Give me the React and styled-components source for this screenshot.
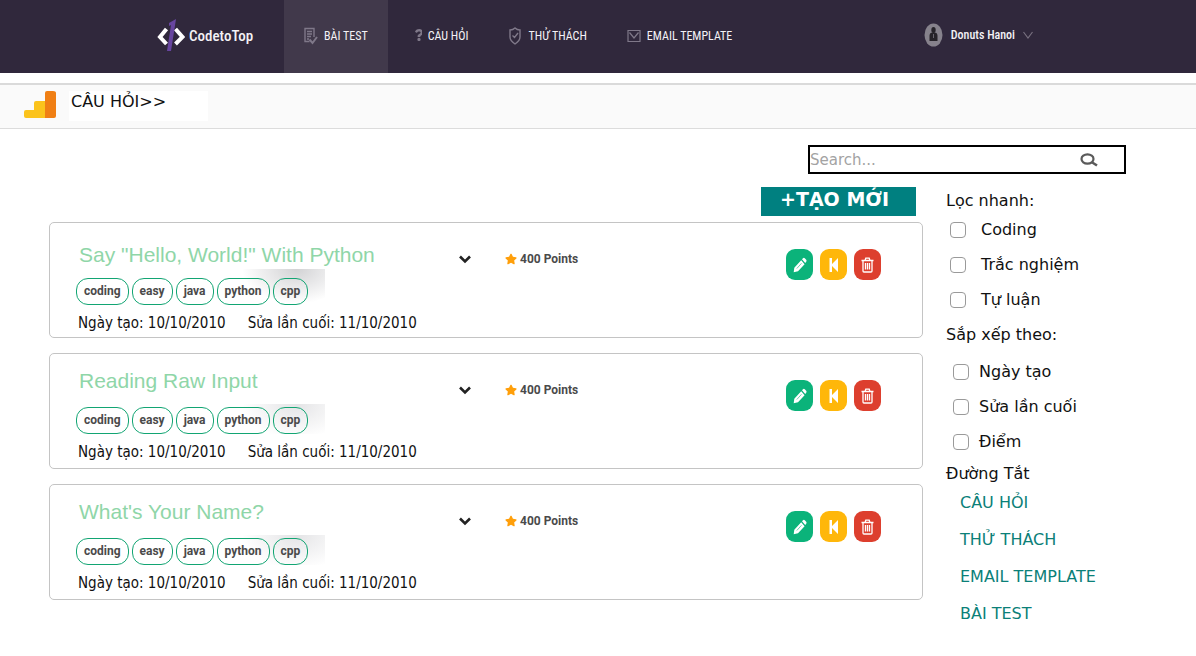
import React from "react";
import styled, { createGlobalStyle } from "styled-components";
import { FaStar, FaQuestion } from "react-icons/fa";

const GlobalStyle = createGlobalStyle`
  *, *::before, *::after { box-sizing: border-box; }
  body {
    margin: 0;
    background: #fff;
    color: #111;
    font-family: "DejaVu Sans", sans-serif;
    font-size: 16px;
  }
  button, input { font: inherit; }
  ul, h1, h2, p { margin: 0; padding: 0; list-style: none; font-weight: 400; font-size: inherit; }
  a { color: inherit; text-decoration: none; }
  svg { display: block; flex: none; }
`;

const Header = styled.header`
  display: flex;
  align-items: stretch;
  height: 73px;
  padding: 0 163px 0 157px;
  background: #30283c;
  color: #f4f2f6;
  font-family: "Roboto Condensed", "Liberation Sans Narrow", Roboto, sans-serif;
  white-space: nowrap;
`;

const Brand = styled.a`
  display: flex;
  align-items: center;
  gap: 4px;
  width: 127px;
  padding-bottom: 2px;
  font-size: 15px;
  font-weight: 500;
`;

const Nav = styled.nav`
  display: flex;
`;

const NavLink = styled.a`
  display: flex;
  align-items: center;
  gap: 6px;
  padding: 0 20px 2px;
  font-size: 12px;
  font-weight: 400;
  background: ${(p) => (p.$active ? "#41394b" : "transparent")};
  svg { color: #7f7889; }
`;

const UserButton = styled.button`
  display: flex;
  align-items: center;
  gap: 8px;
  margin-left: auto;
  padding: 0 0 4px;
  border: 0;
  background: none;
  color: inherit;
  font-family: inherit;
  font-size: 12px;
  font-weight: 500;
`;

const Breadcrumb = styled.div`
  display: flex;
  align-items: flex-start;
  gap: 13px;
  height: 46px;
  margin-top: 10px;
  padding: 6px 24px 0;
  background: #fafafa;
  border-top: 2px solid #dadada;
  border-bottom: 1px solid #dcdcdc;
`;

const Crumb = styled.h1`
  width: 139px;
  height: 30px;
  padding-left: 2px;
  background: #fff;
  line-height: 22px;
`;

const Page = styled.main`
  display: grid;
  grid-template-columns: minmax(0, 1fr) 180px;
  column-gap: 23px;
  padding: 16px 70px 32px 49px;
`;

const Search = styled.form`
  grid-column: 1 / -1;
  justify-self: end;
  display: flex;
  align-items: center;
  width: 318px;
  height: 29px;
  margin-bottom: 13px;
  padding-right: 25px;
  border: 2px solid #000;
`;

const SearchInput = styled.input`
  flex: 1;
  min-width: 0;
  padding: 0;
  border: 0;
  outline: 0;
  background: none;
  font-size: 15px;
  &::placeholder { color: #a3a3a3; opacity: 1; }
`;

const PlainButton = styled.button`
  display: flex;
  align-items: center;
  padding: 0;
  border: 0;
  background: none;
  color: #222;
`;

const Questions = styled.section`
  display: flex;
  flex-direction: column;
`;

const CreateButton = styled.button`
  align-self: flex-end;
  width: 155px;
  height: 29px;
  margin: 0 7px 6px 0;
  padding: 0 8px 5px 0;
  border: 0;
  background: #008080;
  color: #fff;
  font-size: 19px;
  font-weight: 700;
  line-height: 24px;
  white-space: nowrap;
`;

const CardList = styled.ul`
  display: flex;
  flex-direction: column;
  gap: 15px;
`;

const Card = styled.li`
  display: grid;
  grid-template-columns: minmax(0, 382px) 47px minmax(0, 1fr) auto;
  align-items: start;
  min-height: 116px;
  padding: 0 41px 0 26px;
  border: 1px solid #c4c4c4;
  border-radius: 5px;
`;

const Info = styled.div`
  padding-top: ${(p) => (p.$lead ? "20px" : "15px")};
`;

const Title = styled.h2`
  padding-left: 3px;
  color: #8fd6a8;
  font-family: "Liberation Sans", sans-serif;
  font-size: 21px;
  line-height: 24px;
  white-space: nowrap;
`;

const Tags = styled.ul`
  display: flex;
  gap: 3px;
  width: fit-content;
  margin-top: ${(p) => (p.$lead ? "2px" : "11px")};
  padding: ${(p) => (p.$lead ? "9px" : "3px")} 17px 0 0;
  background: radial-gradient(ellipse at 65% 0, ${(p) => (p.$lead ? "#d2d2d4" : "#e4e4e6")}, #fff 72%)
    right top / 82px 34px no-repeat;
`;

const Tag = styled.li`
  height: 27px;
  padding: 0 7px;
  border: 1px solid #12a573;
  border-radius: 12px;
  color: #4a4a4a;
  font-family: Roboto, sans-serif;
  font-size: 12px;
  font-weight: 700;
  line-height: 24px;
`;

const Dates = styled.p`
  display: flex;
  gap: 22px;
  margin-top: 9px;
  padding-left: 2px;
  font-family: "DejaVu Sans Condensed", "DejaVu Sans", sans-serif;
  font-size: 15px;
  line-height: 18px;
  white-space: nowrap;
`;

const Toggle = styled(PlainButton)`
  margin-top: 32px;
`;

const Points = styled.p`
  display: flex;
  align-items: center;
  gap: 3px;
  margin-top: 28px;
  color: #4a4a4a;
  font-family: Roboto, sans-serif;
  font-size: 12px;
  font-weight: 700;
  line-height: 16px;
  svg { color: #ff9f0a; }
`;

const Actions = styled.div`
  display: flex;
  gap: 7px;
  margin-top: 26px;
`;

const ActionButton = styled.button`
  display: flex;
  align-items: center;
  justify-content: center;
  width: 27px;
  height: 31px;
  padding: 0;
  border: 0;
  border-radius: 9px;
  background: ${(p) => p.$color};
  color: #fff;
`;

const Sidebar = styled.aside`
  padding-top: 4px;
`;

const SideTitle = styled.h2`
  line-height: 20px;
  white-space: nowrap;
`;

const Options = styled.ul`
  display: flex;
  flex-direction: column;
  gap: 15px;
  padding: ${(p) => (p.$wide ? "17px 0 12px 7px" : "9px 0 15px 4px")};
`;

const Option = styled.label`
  display: flex;
  align-items: center;
  gap: ${(p) => (p.$wide ? "10px" : "15px")};
  line-height: 20px;
  white-space: nowrap;
`;

const Checkbox = styled.input`
  appearance: none;
  width: 16px;
  height: 16px;
  margin: 0;
  border: 1px solid #9a9a9a;
  border-radius: 4px;
  background: #fff;
  &:checked { background: #008080; }
`;

const Shortcuts = styled.ul`
  display: flex;
  flex-direction: column;
  gap: 17px;
  padding: 9px 0 0 14px;
  color: #0b8078;
  line-height: 20px;
  white-space: nowrap;
`;

const LogoMark = () => (
  <svg width="28" height="36" viewBox="0 0 28 36" fill="none" aria-hidden="true">
    <path d="M9.500 11 3 19l6.500 7M18.500 11l7 8-7 7" stroke="#fff" strokeWidth="4" />
    <path d="m12 5 7-4-5 32h-4l4-26-2 1z" fill="#67459f" />
  </svg>
);

const TestIcon = () => (
  <svg width="14" height="18" viewBox="0 0 14 18" fill="none" stroke="currentColor" strokeWidth="1.400" aria-hidden="true">
    <path d="M5.500 14.500H1V1.500h9V10M3 4.500h5M3 7h5M3 9.500h4M3 12h2" />
    <path d="M5.500 12.500l3 3.500 4.500-6" strokeWidth="2" />
  </svg>
);

const QuestionIcon = () => (
  <svg width="14" height="16" viewBox="0 0 14 16" aria-hidden="true">
    <FaQuestion x="5" y="1" width="10" height="14" />
  </svg>
);

const ShieldIcon = () => (
  <svg width="14" height="18" viewBox="0 0 14 18" fill="none" stroke="currentColor" strokeWidth="1.400" aria-hidden="true">
    <path d="M7 1c1.500 1.500 3 2 5 2v7c0 3-2 5-5 7-3-2-5-4-5-7V3c2 0 3.500-.5 5-2zM4.500 8.500l2 2L10 6" />
  </svg>
);

const MailIcon = () => (
  <svg width="14" height="14" viewBox="0 0 14 14" fill="none" stroke="currentColor" strokeWidth="1.200" aria-hidden="true">
    <path d="M1 1.500h12v11H1zM2.500 3.500 7 9l4.500-5.500" />
  </svg>
);

const Avatar = () => (
  <svg width="19" height="24" viewBox="0 0 19 24" aria-hidden="true">
    <ellipse cx="9.500" cy="12" rx="9" ry="11.500" fill="#86828c" />
    <ellipse cx="9.500" cy="7" rx="2.200" ry="3" fill="#262329" />
    <path d="M9.500 9.500c3.500 0 4 1.500 4 4V18h-8v-4.500c0-2.500.5-4 4-4z" fill="#262329" />
    <path d="M9.500 11v4" stroke="#86828c" strokeWidth=".7" />
  </svg>
);

const ThinChevron = () => (
  <svg width="10" height="8" viewBox="0 0 10 8" fill="none" stroke="#77707f" strokeWidth="1.200" aria-hidden="true">
    <path d="m.5 1 4.500 6 4.500-6" />
  </svg>
);

const AnalyticsIcon = () => (
  <svg width="32" height="28" viewBox="0 0 32 28" aria-hidden="true">
    <path d="M0 21q0-2 2-2h8v-7q0-2 2-2h10v17H2q-2 0-2-2z" fill="#fbc31c" />
    <path d="M21 2q0-2 2-2h6q3 0 3 2v23q0 2-2 2h-9z" fill="#f07f14" />
  </svg>
);

const SearchIcon = () => (
  <svg width="20" height="14" viewBox="0 0 20 14" fill="none" stroke="#5a5a5a" aria-hidden="true">
    <ellipse cx="8.500" cy="6" rx="6" ry="4.600" strokeWidth="2.200" />
    <path d="m12.500 9 5.500 3.500" strokeWidth="2.600" />
  </svg>
);

const BoldChevron = () => (
  <svg width="14" height="9" viewBox="0 0 14 9" fill="none" stroke="currentColor" strokeWidth="2.600" aria-hidden="true">
    <path d="m2 1.500 5 5 5-5" />
  </svg>
);

const PencilIcon = () => (
  <svg width="14" height="16" viewBox="0 0 14 16" fill="#fff" aria-hidden="true">
    <path d="m9 2.300 1-1.100q1-.8 2 .2l1.200 1.400q.8 1 0 2l-1 1.200zM8.200 3.200l3.400 4L5 14.300l-4.300 1 .6-4.600z" />
    <path d="m3.800 11.500 4.700-5.200" stroke="#0bb37a" strokeWidth=".6" />
  </svg>
);

const BackIcon = () => (
  <svg width="10" height="16" viewBox="0 0 10 16" fill="#fff" aria-hidden="true">
    <path d="M.5 1h2.500v6L9 1v14L3 9v6H.5z" />
  </svg>
);

const TrashIcon = () => (
  <svg width="13" height="16" viewBox="0 0 13 16" fill="none" stroke="#fff" strokeWidth="1.300" aria-hidden="true">
    <path d="M.5 3.500h12M4 3.500l.8-2.300h3.400L9 3.500M2 3.500V14q0 1 1 1h7q1 0 1-1V3.500M4.500 6v6.500M6.500 6v6.500M8.500 6v6.500" />
  </svg>
);

const NAV = [
  { label: "BÀI TEST", Icon: TestIcon, active: true },
  { label: "CÂU HỎI", Icon: QuestionIcon },
  { label: "THỬ THÁCH", Icon: ShieldIcon },
  { label: "EMAIL TEMPLATE", Icon: MailIcon },
];
const QUESTIONS = ['Say "Hello, World!" With Python', "Reading Raw Input", "What's Your Name?"];
const TAGS = ["coding", "easy", "java", "python", "cpp"];
const FILTERS = ["Coding", "Trắc nghiệm", "Tự luận"];
const SORTS = ["Ngày tạo", "Sửa lần cuối", "Điểm"];
const SHORTCUTS = ["CÂU HỎI", "THỬ THÁCH", "EMAIL TEMPLATE", "BÀI TEST"];

function QuestionCard({ title, lead }) {
  return (
    <Card>
      <Info $lead={lead}>
        <Title>{title}</Title>
        <Tags $lead={lead}>
          {TAGS.map((tag) => <Tag key={tag}>{tag}</Tag>)}
        </Tags>
        <Dates>
          <span>Ngày tạo: 10/10/2010</span>
          <span>Sửa lần cuối: 11/10/2010</span>
        </Dates>
      </Info>
      <Toggle type="button" aria-label="Mở rộng"><BoldChevron /></Toggle>
      <Points><FaStar size={12} />400 Points</Points>
      <Actions>
        <ActionButton type="button" $color="#0bb37a" aria-label="Sửa"><PencilIcon /></ActionButton>
        <ActionButton type="button" $color="#ffb70a" aria-label="Quay lại"><BackIcon /></ActionButton>
        <ActionButton type="button" $color="#dd3f2e" aria-label="Xóa"><TrashIcon /></ActionButton>
      </Actions>
    </Card>
  );
}

function OptionGroup({ items, wide }) {
  return (
    <Options $wide={wide}>
      {items.map((item) => (
        <li key={item}>
          <Option $wide={wide}><Checkbox type="checkbox" />{item}</Option>
        </li>
      ))}
    </Options>
  );
}

export default function App() {
  return (
    <>
      <GlobalStyle />
      <Header>
        <Brand href="#"><LogoMark />CodetoTop</Brand>
        <Nav>
          {NAV.map(({ label, Icon, active }) => (
            <NavLink key={label} href="#" $active={active}><Icon />{label}</NavLink>
          ))}
        </Nav>
        <UserButton type="button"><Avatar />Donuts Hanoi<ThinChevron /></UserButton>
      </Header>
      <Breadcrumb>
        <AnalyticsIcon />
        <Crumb>CÂU HỎI&gt;&gt;</Crumb>
      </Breadcrumb>
      <Page>
        <Search role="search">
          <SearchInput type="text" placeholder="Search..." aria-label="Search" />
          <PlainButton type="button" aria-label="Search"><SearchIcon /></PlainButton>
        </Search>
        <Questions>
          <CreateButton type="button">+TẠO MỚI</CreateButton>
          <CardList>
            {QUESTIONS.map((title, i) => <QuestionCard key={title} title={title} lead={i === 0} />)}
          </CardList>
        </Questions>
        <Sidebar>
          <SideTitle>Lọc nhanh:</SideTitle>
          <OptionGroup items={FILTERS} />
          <SideTitle>Sắp xếp theo:</SideTitle>
          <OptionGroup items={SORTS} wide />
          <SideTitle>Đường Tắt</SideTitle>
          <Shortcuts>
            {SHORTCUTS.map((item) => <li key={item}><a href="#">{item}</a></li>)}
          </Shortcuts>
        </Sidebar>
      </Page>
    </>
  );
}
